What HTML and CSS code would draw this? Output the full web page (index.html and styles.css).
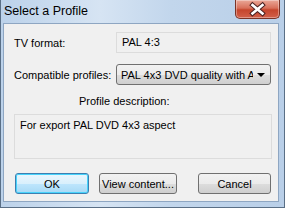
FILE: index.html
```html
<!DOCTYPE html>
<html>
<head>
<meta charset="utf-8">
<link rel="stylesheet" href="styles.css">
</head>
<body>
<div class="window">
  <div class="titlebar">
    <span class="title">Select a Profile</span>
    <div class="close">
      <svg width="45" height="19" viewBox="0 0 45 19">
        <path d="M17.5 5 L27.5 13.5 M27.5 5 L17.5 13.5" stroke="#4a2020" stroke-width="4.6" stroke-linecap="square"/>
        <path d="M17.5 5 L27.5 13.5 M27.5 5 L17.5 13.5" stroke="#ffffff" stroke-width="2.6" stroke-linecap="square"/>
      </svg>
    </div>
  </div>
  <div class="client">
    <div class="form">
      <label class="lbl">TV format:</label>
      <div class="field">PAL 4:3</div>
      <label class="lbl">Compatible profiles:</label>
      <div class="combo"><span class="combo-text">PAL 4x3 DVD quality with Audio</span><span class="arrow"></span></div>
    </div>
    <div class="desc-label">Profile description:</div>
    <div class="desc">For export PAL DVD 4x3 aspect</div>
    <div class="buttons">
      <button class="btn ok">OK</button>
      <button class="btn view">View content...</button>
      <button class="btn cancel">Cancel</button>
    </div>
  </div>
</div>
</body>
</html>
```
FILE: styles.css
```css
* { box-sizing: border-box; }
html, body { margin: 0; padding: 0; }
body {
  width: 285px;
  height: 208px;
  overflow: hidden;
  font-family: "Liberation Sans", Arial, sans-serif;
  font-size: 11px;
  color: #000;
}
.window {
  width: 285px;
  height: 208px;
  border: 1px solid #5a6f86;
  border-top: none;
  background: linear-gradient(90deg, #bcd2ea 0%, #d6e4f3 35%, #c2d6ec 60%, #b9cfe8 100%);
  display: flex;
  flex-direction: column;
  padding: 0 5px 5px 2px;
}
.titlebar {
  height: 23px;
  display: flex;
  align-items: flex-start;
  justify-content: space-between;
  flex-shrink: 0;
}
.title {
  padding-top: 4px;
  padding-left: 1px;
  font-size: 12.5px;
  color: #000;
}
.close {
  width: 45px;
  height: 19px;
  margin-right: -1px;
  border: 1px solid #7a3326;
  border-top: none;
  border-radius: 0 0 5px 5px;
  background: linear-gradient(180deg, #eaa898 0%, #d8705a 45%, #c5452c 55%, #d2604a 100%);
  display: flex;
  align-items: center;
  justify-content: center;
  box-shadow: inset 0 0 0 1px rgba(255,255,255,0.35);
}
.close svg { display: block; margin: -1px; }
.client {
  flex: 1;
  background: #f0f0f0;
  border: 1px solid #8ea6c2;
  padding: 8px 6px 0 10px;
  display: flex;
  flex-direction: column;
}
.form {
  display: grid;
  grid-template-columns: 102px 155px;
  grid-template-rows: 21px 21px;
  row-gap: 11px;
  align-items: center;
}
.lbl { white-space: nowrap; }
.field {
  height: 21px;
  border: 1px solid #dcdcdc;
  background: #f0f0f0;
  padding: 3px 0 0 5px;
}
.combo {
  height: 21px;
  border: 1px solid #707070;
  border-radius: 3px;
  background: linear-gradient(180deg, #f2f2f2 0%, #ebebeb 50%, #dddddd 51%, #cfcfcf 100%);
  display: flex;
  align-items: center;
  padding: 0 5px 0 4px;
  overflow: hidden;
}
.combo-text {
  flex: 1;
  white-space: nowrap;
  overflow: hidden;
  margin-right: 4px;
}
.arrow {
  width: 0;
  height: 0;
  border-left: 4px solid transparent;
  border-right: 4px solid transparent;
  border-top: 4px solid #000;
  flex-shrink: 0;
}
.desc-label {
  margin-top: 10px;
  height: 15px;
  padding-left: 65px;
}
.desc {
  margin-top: 4px;
  height: 45px;
  width: 258px;
  border: 1px solid #dcdcdc;
  background: #f0f0f0;
  padding: 4px 0 0 5px;
}
.buttons {
  margin-top: 14px;
  display: flex;
  gap: 0;
}
.btn {
  font-family: inherit;
  font-size: 11px;
  height: 21px;
  border: 1px solid #707070;
  border-radius: 3px;
  background: linear-gradient(180deg, #f2f2f2 0%, #ebebeb 50%, #dddddd 51%, #cfcfcf 100%);
  padding: 0;
  color: #000;
  white-space: nowrap;
}
.ok {
  width: 74px;
  margin-left: 1px;
  border-color: #3c7fb1;
  box-shadow: inset 0 0 0 1px #48d3fb;
  background: linear-gradient(180deg, #eaf6fd 0%, #d9f0fc 50%, #bee6fd 51%, #a7d9f5 100%);
}
.view { width: 78px; margin-left: 10px; }
.cancel { width: 73px; margin-left: 21px; }
```
